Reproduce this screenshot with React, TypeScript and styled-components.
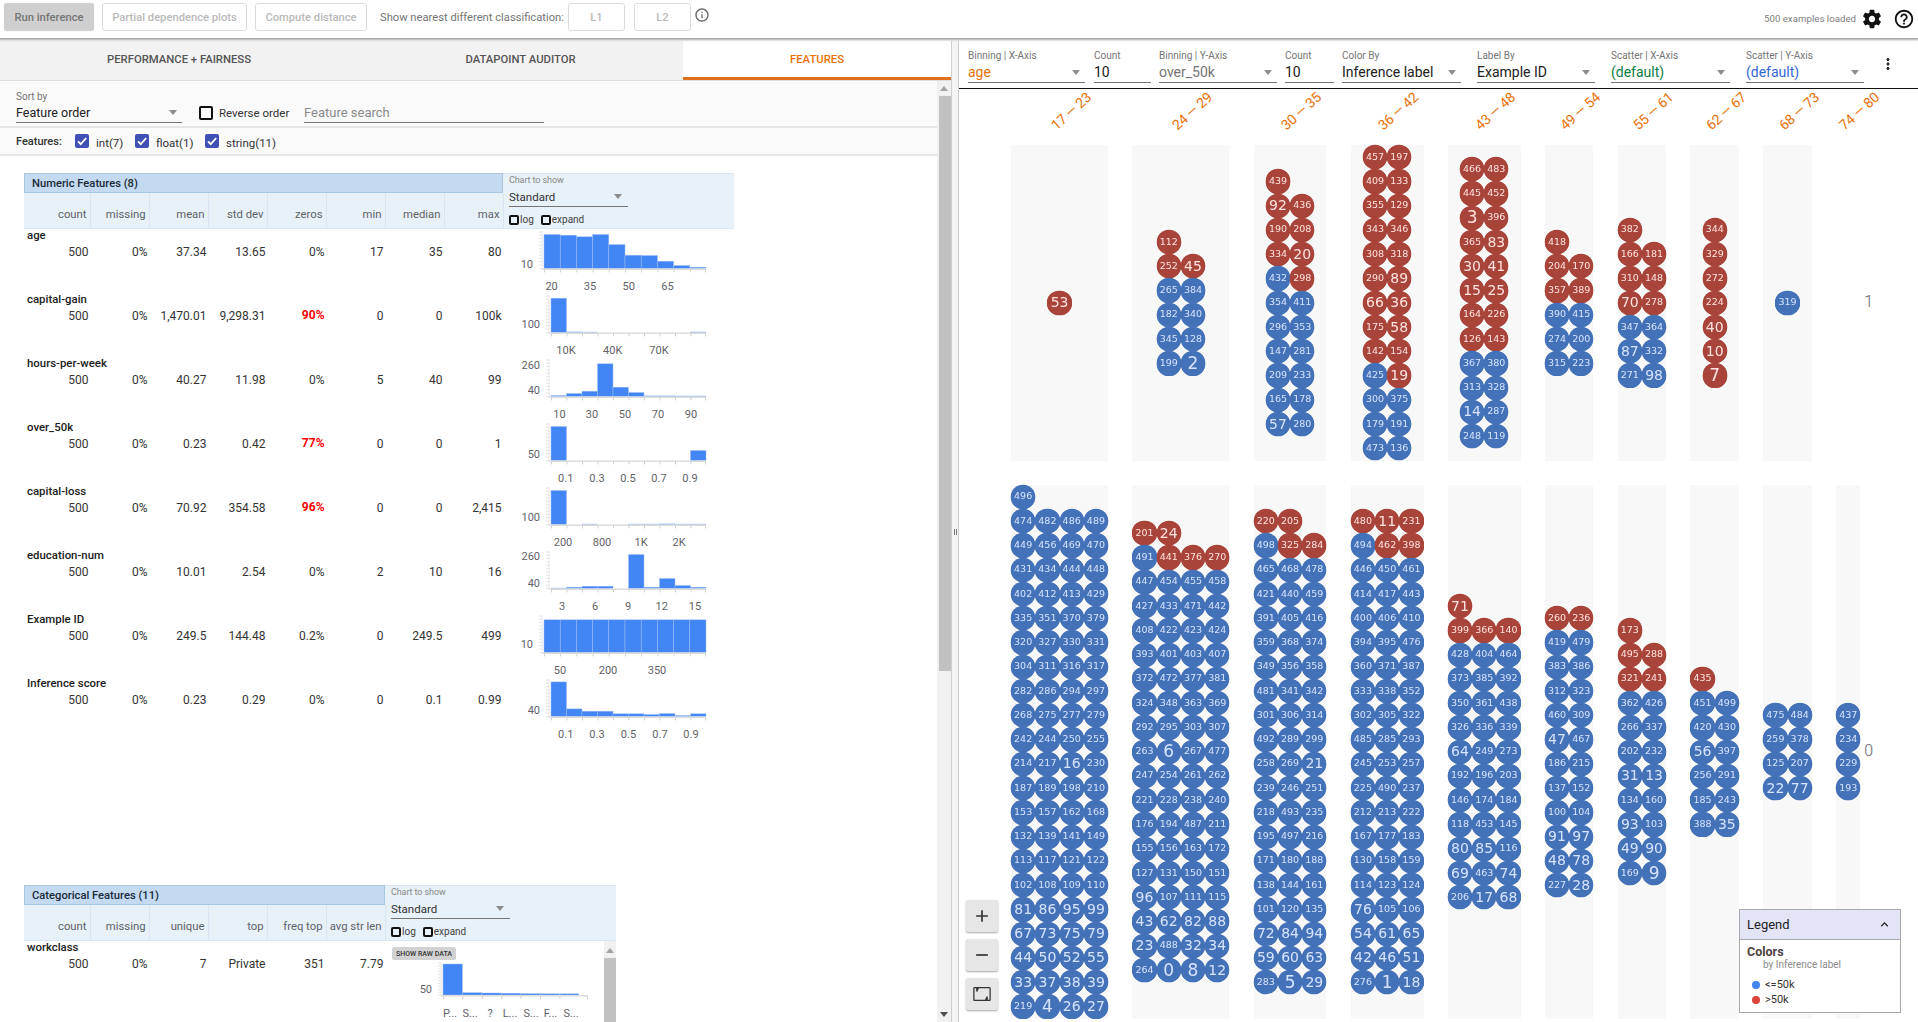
import React from "react";
import styled, { createGlobalStyle } from "styled-components";

const U = 24.27;

const GlobalStyle = createGlobalStyle`
  html, body {
    margin: 0;
    padding: 0;
    background: #fff;
    font-family: Roboto, "Liberation Sans", sans-serif;
    color: #212121;
    overflow: hidden;
  }
`;

type ChartSpec = {
  start: number;
  w: number;
  bars: number[];
  y: [string, number][];
  x: [string, number][];
};

const NUMERIC_COLUMNS = ["count", "missing", "mean", "std dev", "zeros", "min", "median", "max"];
const CAT_COLUMNS = ["count", "missing", "unique", "top", "freq top", "avg str len"];

const numericRows: { name: string; values: string[]; chart: ChartSpec }[] = [
  {
    name: "age",
    values: ["500", "0%", "37.34", "13.65", "0%", "17", "35", "80"],
    chart: {
      start: 544,
      w: 16.2,
      bars: [34, 33.3, 31.7, 34, 24, 13.3, 13, 7.3, 3, 1.3],
      y: [["10", 35.7]],
      x: [["20", 551.6], ["35", 590], ["50", 628.7], ["65", 667.5]],
    },
  },
  {
    name: "capital-gain",
    values: ["500", "0%", "1,470.01", "9,298.31", "90%", "0", "0", "100k"],
    chart: {
      start: 551,
      w: 15.5,
      bars: [34.3, 0.6, 0.4, 0, 0, 0, 0, 0, 0, 0.5],
      y: [["100", 32]],
      x: [["10K", 566], ["40K", 612.7], ["70K", 659]],
    },
  },
  {
    name: "hours-per-week",
    values: ["500", "0%", "40.27", "11.98", "0%", "5", "40", "99"],
    chart: {
      start: 551,
      w: 15.5,
      bars: [1, 3, 5.3, 32.7, 9.3, 4, 0.6, 0.6, 0.5, 0.5],
      y: [["260", 8.7], ["40", 34]],
      x: [["10", 559.4], ["30", 592], ["50", 625], ["70", 658], ["90", 691]],
    },
  },
  {
    name: "over_50k",
    values: ["500", "0%", "0.23", "0.42", "77%", "0", "0", "1"],
    chart: {
      start: 551,
      w: 15.5,
      bars: [34, 0, 0, 0, 0, 0, 0, 0, 0, 10],
      y: [["50", 34]],
      x: [["0.1", 565.7], ["0.3", 597], ["0.5", 628], ["0.7", 659], ["0.9", 690]],
    },
  },
  {
    name: "capital-loss",
    values: ["500", "0%", "70.92", "354.58", "96%", "0", "0", "2,415"],
    chart: {
      start: 551,
      w: 15.5,
      bars: [34, 0, 0.4, 0, 0, 0.4, 0.4, 0.6, 0.4, 0.4],
      y: [["100", 32.7]],
      x: [["200", 563], ["800", 602], ["1K", 641], ["2K", 679]],
    },
  },
  {
    name: "education-num",
    values: ["500", "0%", "10.01", "2.54", "0%", "2", "10", "16"],
    chart: {
      start: 551,
      w: 15.5,
      bars: [0.4, 1.3, 2.3, 2.3, 0, 34, 1.3, 10, 3, 1.3],
      y: [["260", 8.3], ["40", 34.7]],
      x: [["3", 562], ["6", 595], ["9", 628], ["12", 661.7], ["15", 695]],
    },
  },
  {
    name: "Example ID",
    values: ["500", "0%", "249.5", "144.48", "0.2%", "0", "249.5", "499"],
    chart: {
      start: 544,
      w: 16.2,
      bars: [32.7, 32.7, 32.7, 32.7, 32.7, 32.7, 32.7, 32.7, 32.7, 32.7],
      y: [["10", 32]],
      x: [["50", 560], ["200", 608], ["350", 657]],
    },
  },
  {
    name: "Inference score",
    values: ["500", "0%", "0.23", "0.29", "0%", "0", "0.1", "0.99"],
    chart: {
      start: 551,
      w: 15.5,
      bars: [34.6, 7.6, 5.3, 5.3, 2.7, 2.7, 2, 3, 1, 2.7],
      y: [["40", 33.7]],
      x: [["0.1", 565.7], ["0.3", 597], ["0.5", 628.5], ["0.7", 660], ["0.9", 691]],
    },
  },
];

const catChart: ChartSpec = {
  start: 443,
  w: 19.4,
  bars: [31, 2.3, 2, 1.8, 1.4, 1.2, 1.2],
  y: [["50", 30.5]],
  x: [["P...", 450], ["S...", 470], ["?", 490], ["L...", 510], ["S...", 531], ["F...", 550.5], ["S...", 571]],
};

const binLabels = ["17 — 23", "24 — 29", "30 — 35", "36 — 42", "43 — 48", "49 — 54", "55 — 61", "62 — 67", "68 — 73", "74 — 80"];
const binCols = [4, 4, 3, 3, 3, 2, 2, 2, 2, 1];

// "*" marks a >50k dot, "|" starts a new row
const topBins = [
  "*53",
  "*112|*252 *45|265 384|182 340|345 128|199 2",
  "*439|*92 *436|*190 *208|*334 *20|432 *298|354 411|296 353|147 281|209 233|165 178|57 280",
  "*457 *197|*409 *133|*355 *129|*343 *346|*308 *318|*290 *89|*66 *36|*175 *58|*142 *154|425 *19|300 375|179 191|473 136",
  "*466 *483|*445 *452|*3 *396|*365 *83|*30 *41|*15 *25|*164 *226|*126 *143|367 380|313 328|14 287|248 119",
  "*418|*204 *170|*357 *389|390 415|274 200|315 223",
  "*382|*166 *181|*310 *148|*70 *278|347 364|87 332|271 98",
  "*344|*329|*272|*224|*40|*10|*7",
  "319",
  "",
];

const bottomBins = [
  "496|474 482 486 489|449 456 469 470|431 434 444 448|402 412 413 429|335 351 370 379|320 327 330 331|304 311 316 317|282 286 294 297|268 275 277 279|242 244 250 255|214 217 16 230|187 189 198 210|153 157 162 168|132 139 141 149|113 117 121 122|102 108 109 110|81 86 95 99|67 73 75 79|44 50 52 55|33 37 38 39|219 4 26 27",
  "*201 *24|491 *441 *376 *270|447 454 455 458|427 433 471 442|408 422 423 424|393 401 403 407|372 472 377 381|324 348 363 369|292 295 303 307|263 6 267 477|247 254 261 262|221 228 238 240|176 194 487 211|155 156 163 172|127 131 150 151|96 107 111 115|43 62 82 88|23 488 32 34|264 0 8 12",
  "*220 *205|498 *325 *284|465 468 478|421 440 459|391 405 416|359 368 374|349 356 358|481 341 342|301 306 314|492 289 299|258 269 21|239 246 251|218 493 235|195 497 216|171 180 188|138 144 161|101 120 135|72 84 94|59 60 63|283 5 29",
  "*480 *11 *231|494 *462 *398|446 450 461|414 417 443|400 406 410|394 395 476|360 371 387|333 338 352|302 305 322|485 285 293|245 253 257|225 490 237|212 213 222|167 177 183|130 158 159|114 123 124|76 105 106|54 61 65|42 46 51|276 1 18",
  "*71|*399 *366 *140|428 404 464|373 385 392|350 361 438|326 336 339|64 249 273|192 196 203|146 174 184|118 453 145|80 85 116|69 463 74|206 17 68",
  "*260 *236|419 479|383 386|312 323|460 309|47 467|186 215|137 152|100 104|91 97|48 78|227 28",
  "*173|*495 *288|*321 *241|362 426|266 337|202 232|31 13|134 160|93 103|49 90|169 9",
  "*435|451 499|420 430|56 397|256 291|185 243|388 35",
  "475 484|259 378|125 207|22 77",
  "437|234|229|193",
];

const controls = [
  { label: "Binning | X-Axis", value: "age", width: 117, after: 9, color: "#e8710a", caret: true },
  { label: "Count", value: "10", width: 57, after: 8, color: "#212121", caret: false },
  { label: "Binning | Y-Axis", value: "over_50k", width: 118, after: 8, color: "#757575", caret: true },
  { label: "Count", value: "10", width: 49, after: 8, color: "#212121", caret: false },
  { label: "Color By", value: "Inference label", width: 119, after: 16, color: "#212121", caret: true },
  { label: "Label By", value: "Example ID", width: 118, after: 16, color: "#212121", caret: true },
  { label: "Scatter | X-Axis", value: "(default)", width: 119, after: 16, color: "#0b8043", caret: true },
  { label: "Scatter | Y-Axis", value: "(default)", width: 118, after: 0, color: "#3367d6", caret: true },
];

function Histogram({ spec, origin, base, labelY, axisEnd }: { spec: ChartSpec; origin: number; base: number; labelY: number; axisEnd: number }) {
  const left = spec.start - origin;
  const right = axisEnd - origin;
  const ladder = Array.from({ length: 12 }, (_, i) => 3 + ((base - 3) / 11) * i);
  return (
    <svg width="229" height="64" style={{ display: "block", flex: "none" }}>
      {ladder.map((y) => (
        <line key={y} x1={left - 5} x2={left - 2} y1={y} y2={y} stroke="#e3e3e3" />
      ))}
      <line x1={left - 2} x2={left - 2} y1={2} y2={base} stroke="#e6e6e6" />
      {spec.bars.map((h, i) => (
        <rect key={i} x={left + i * spec.w} y={base - h} width={spec.w} height={h} fill="#4285f4" stroke="#9dbdf7" strokeWidth="0.5" />
      ))}
      <rect x={left - 2} y={base} width={right - left + 2} height={1.5} fill="#dcdcdc" />
      {spec.bars.map((_, i) => (
        <line key={i} x1={left + i * spec.w + 0.5} x2={left + i * spec.w + 0.5} y1={base + 1} y2={base + 4} stroke="#cfcfcf" />
      ))}
      <line x1={right - 0.5} x2={right - 0.5} y1={base + 1} y2={base + 4} stroke="#cfcfcf" />
      {spec.y.map(([t, y]) => (
        <AxisText key={t} x={left - 11} y={y} textAnchor="end" dominantBaseline="middle">
          {t}
        </AxisText>
      ))}
      {spec.x.map(([t, x], i) => (
        <AxisText key={i} x={x - origin} y={labelY} textAnchor="middle" dominantBaseline="middle">
          {t}
        </AxisText>
      ))}
    </svg>
  );
}

function Dots({ rows }: { rows: string }) {
  return (
    <Stack>
      {rows.split("|").map((row, i) => (
        <DotRow key={i}>
          {row.split(" ").map((v) => {
            const id = v.replace("*", "");
            return (
              <Dot key={id} $red={v.startsWith("*")} $digits={id.length}>
                {id}
              </Dot>
            );
          })}
        </DotRow>
      ))}
    </Stack>
  );
}

function Caret() {
  return <CaretShape aria-hidden="true" />;
}

function BlueTick() {
  return (
    <BlueCheck viewBox="0 0 14 14">
      <path d="M3 7.3l2.8 2.9L11.2 4" />
    </BlueCheck>
  );
}

export default function App() {
  return (
    <Page>
      <GlobalStyle />
      <TopBar>
        <RunButton>Run inference</RunButton>
        <GhostButton $width={145}>Partial dependence plots</GhostButton>
        <GhostButton $width={112}>Compute distance</GhostButton>
        <NearestLabel>Show nearest different classification:</NearestLabel>
        <SmallButton $width={57}>L1</SmallButton>
        <SmallButton $width={57}>L2</SmallButton>
        <InfoIcon viewBox="0 0 24 24">
          <path d="M11 7h2v2h-2zm0 4h2v6h-2zm1-9C6.48 2 2 6.48 2 12s4.48 10 10 10 10-4.48 10-10S17.52 2 12 2zm0 18c-4.41 0-8-3.59-8-8s3.59-8 8-8 8 3.59 8 8-3.59 8-8 8z" />
        </InfoIcon>
        <LoadedText>500 examples loaded</LoadedText>
        <GearIcon viewBox="0 0 24 24">
          <path d="M19.43 12.98c.04-.32.07-.64.07-.98s-.03-.66-.07-.98l2.11-1.65c.19-.15.24-.42.12-.64l-2-3.46c-.12-.22-.39-.3-.61-.22l-2.49 1c-.52-.4-1.08-.73-1.69-.98l-.38-2.65C14.46 2.18 14.25 2 14 2h-4c-.25 0-.46.18-.49.42l-.38 2.65c-.61.25-1.17.59-1.69.98l-2.49-1c-.23-.09-.49 0-.61.22l-2 3.46c-.13.22-.07.49.12.64l2.11 1.65c-.04.32-.07.65-.07.98s.03.66.07.98l-2.11 1.65c-.19.15-.24.42-.12.64l2 3.46c.12.22.39.3.61.22l2.49-1c.52.4 1.08.73 1.69.98l.38 2.65c.03.24.24.42.49.42h4c.25 0 .46-.18.49-.42l.38-2.65c.61-.25 1.17-.59 1.69-.98l2.49 1c.23.09.49 0 .61-.22l2-3.46c.12-.22.07-.49-.12-.64l-2.11-1.65zM12 15.5c-1.93 0-3.5-1.57-3.5-3.5s1.57-3.5 3.5-3.5 3.5 1.57 3.5 3.5-1.57 3.5-3.5 3.5z" />
        </GearIcon>
        <HelpIcon viewBox="0 0 24 24">
          <path d="M11 18h2v-2h-2v2zm1-16C6.48 2 2 6.48 2 12s4.48 10 10 10 10-4.48 10-10S17.52 2 12 2zm0 18c-4.41 0-8-3.59-8-8s3.59-8 8-8 8 3.59 8 8-3.59 8-8 8zm0-14c-2.21 0-4 1.79-4 4h2c0-1.1.9-2 2-2s2 .9 2 2c0 2-3 1.75-3 5h2c0-2.25 3-2.5 3-5 0-2.21-1.79-4-4-4z" />
        </HelpIcon>
      </TopBar>

      <Main>
        <LeftPanel>
          <Tabs>
            <Tab $width={358}>PERFORMANCE + FAIRNESS</Tab>
            <Tab $width={325}>DATAPOINT AUDITOR</Tab>
            <Tab $width={268} $active>
              FEATURES
            </Tab>
          </Tabs>
          <ScrollArea>
            <ScrollContent>
              <SortBar>
                <SortSelect>
                  <TinyLabel>Sort by</TinyLabel>
                  <SelectValue>
                    Feature order
                    <Caret />
                  </SelectValue>
                </SortSelect>
                <BlackCheck />
                <ReverseLabel>Reverse order</ReverseLabel>
                <SearchField>Feature search</SearchField>
              </SortBar>
              <FeatureToggles>
                <TogglesTitle>Features:</TogglesTitle>
                <BlueTick />
                <ToggleLabel $width={39}>int(7)</ToggleLabel>
                <BlueTick />
                <ToggleLabel $width={49}>float(1)</ToggleLabel>
                <BlueTick />
                <ToggleLabel $width={60}>string(11)</ToggleLabel>
              </FeatureToggles>

              <Table $width={710} $top={17}>
                <TableHead>
                  <HeadLeft $width={479}>
                    <TitleBand>Numeric Features (8)</TitleBand>
                    <HeadCells>
                      {NUMERIC_COLUMNS.map((c, i) => (
                        <HeadCell key={c} $first={i === 0}>
                          {c}
                        </HeadCell>
                      ))}
                    </HeadCells>
                  </HeadLeft>
                  <ChartOptions />
                </TableHead>
                {numericRows.map((row) => (
                  <FeatureRow key={row.name}>
                    <RowLeft $width={479}>
                      <FeatureName>{row.name}</FeatureName>
                      <Values>
                        {row.values.map((v, i) => (
                          <Value key={i} $first={i === 0} $alert={i === 4 && parseFloat(v) > 50}>
                            {v}
                          </Value>
                        ))}
                      </Values>
                    </RowLeft>
                    <ChartSlot $left={2}>
                      <Histogram spec={row.chart} origin={505} base={39.5} labelY={58} axisEnd={706} />
                    </ChartSlot>
                  </FeatureRow>
                ))}
              </Table>

              <Table $width={592} $top={144}>
                <TableHead>
                  <HeadLeft $width={361}>
                    <TitleBand>Categorical Features (11)</TitleBand>
                    <HeadCells>
                      {CAT_COLUMNS.map((c, i) => (
                        <HeadCell key={c} $first={i === 0}>
                          {c}
                        </HeadCell>
                      ))}
                    </HeadCells>
                  </HeadLeft>
                  <ChartOptions />
                </TableHead>
                <CatBody>
                  <CatRows>
                    <CatRow>
                      <RowLeft $width={361}>
                        <FeatureName>workclass</FeatureName>
                        <Values>
                          {["500", "0%", "7", "Private", "351", "7.79"].map((v, i) => (
                            <Value key={i} $first={i === 0}>
                              {v}
                            </Value>
                          ))}
                        </Values>
                      </RowLeft>
                      <CatChartSlot>
                        <RawButton>SHOW RAW DATA</RawButton>
                        <Histogram spec={catChart} origin={392} base={35} labelY={53.7} axisEnd={588} />
                      </CatChartSlot>
                    </CatRow>
                    <FeatureName>marital-status</FeatureName>
                  </CatRows>
                  <InnerScrollbar>
                    <ArrowUp />
                    <InnerThumb />
                  </InnerScrollbar>
                </CatBody>
              </Table>
            </ScrollContent>
            <Scrollbar>
              <ArrowBox>
                <ArrowUp />
              </ArrowBox>
              <Thumb />
              <ScrollRest />
              <ArrowBox>
                <ArrowDown />
              </ArrowBox>
            </Scrollbar>
          </ScrollArea>
        </LeftPanel>

        <Divider>
          <HandleLine />
          <HandleLine />
        </Divider>

        <RightPanel>
          <Controls>
            {controls.map((c, i) => (
              <Field key={i} $width={c.width} $after={c.after}>
                <TinyLabel>{c.label}</TinyLabel>
                <FieldValue $color={c.color}>
                  {c.value}
                  {c.caret ? <Caret /> : null}
                </FieldValue>
              </Field>
            ))}
            <MoreIcon viewBox="0 0 24 24">
              <path d="M12 8c1.1 0 2-.9 2-2s-.9-2-2-2-2 .9-2 2 .9 2 2 2zm0 2c-1.1 0-2 .9-2 2s.9 2 2 2 2-.9 2-2-.9-2-2-2zm0 6c-1.1 0-2 .9-2 2s.9 2 2 2 2-.9 2-2-.9-2-2-2z" />
            </MoreIcon>
          </Controls>

          <Canvas>
            <LabelRow>
              {binLabels.map((l, i) => (
                <BinLabel key={l} $cols={binCols[i]}>
                  <BinLabelText>{l}</BinLabelText>
                </BinLabel>
              ))}
            </LabelRow>
            <BinRow $rows={13}>
              {topBins.map((rows, i) => (
                <Bin key={i} $cols={binCols[i]} $empty={!rows}>
                  {rows ? <Dots rows={rows} /> : null}
                </Bin>
              ))}
              <RowLabel>1</RowLabel>
            </BinRow>
            <BinRow $rows={22} $top>
              {bottomBins.map((rows, i) => (
                <Bin key={i} $cols={binCols[i]}>
                  <Dots rows={rows} />
                </Bin>
              ))}
              <RowLabel>0</RowLabel>
            </BinRow>
          </Canvas>

          <ZoomControls>
            <ZoomButton>
              <ZoomIcon viewBox="0 0 24 24">
                <path d="M19 13h-6v6h-2v-6H5v-2h6V5h2v6h6v2z" />
              </ZoomIcon>
            </ZoomButton>
            <ZoomButton>
              <ZoomIcon viewBox="0 0 24 24">
                <path d="M19 13H5v-2h14v2z" />
              </ZoomIcon>
            </ZoomButton>
            <ZoomButton>
              <ZoomIcon viewBox="0 0 24 24">
                <path d="M5 5h3v2H7v2H5V5zm14 14h-3v-2h1v-2h2v4zM3 3.5C2.2 3.5 1.5 4.2 1.5 5v14c0 .8.7 1.5 1.5 1.5h18c.8 0 1.5-.7 1.5-1.5V5c0-.8-.7-1.5-1.5-1.5H3zm0 1.5h18v14H3V5z" />
              </ZoomIcon>
            </ZoomButton>
          </ZoomControls>

          <Legend>
            <LegendHead>
              Legend
              <ChevronIcon viewBox="0 0 24 24">
                <path d="M7.41 15.41L12 10.83l4.59 4.58L18 14l-6-6-6 6z" />
              </ChevronIcon>
            </LegendHead>
            <LegendBody>
              <LegendTitle>Colors</LegendTitle>
              <LegendSub>by Inference label</LegendSub>
              <LegendItem>
                <LegendSwatch $color="#4285f4" />
                {"<=50k"}
              </LegendItem>
              <LegendItem>
                <LegendSwatch $color="#db4437" />
                {">50k"}
              </LegendItem>
            </LegendBody>
          </Legend>
        </RightPanel>
      </Main>
    </Page>
  );
}

function ChartOptions() {
  return (
    <OptionsBox>
      <ChartLabel>Chart to show</ChartLabel>
      <ChartSelect>
        Standard
        <Caret />
      </ChartSelect>
      <ChartChecks>
        <TinyCheck />
        log
        <TinyCheck $left={7} />
        expand
      </ChartChecks>
    </OptionsBox>
  );
}

const Page = styled.div`
  width: 1918px;
  height: 1022px;
  display: flex;
  flex-direction: column;
  overflow: hidden;
  position: relative;
`;

const TopBar = styled.header`
  height: 38px;
  flex: none;
  display: flex;
  align-items: center;
  padding: 0 0 4px 4px;
  box-sizing: border-box;
  background: #fff;
  box-shadow: 0 1px 2px 1px rgba(0, 0, 0, 0.35);
  position: relative;
  z-index: 2;
`;

const RunButton = styled.div`
  width: 90px;
  height: 28px;
  display: flex;
  align-items: center;
  justify-content: center;
  background: #cfcfcf;
  border-radius: 3px;
  color: #757575;
  font-size: 11.2px;
  font-weight: 500;
  box-shadow: 0 0 1px rgba(0, 0, 0, 0.2);
`;

const GhostButton = styled.div<{ $width: number }>`
  width: ${(p) => p.$width}px;
  height: 28px;
  margin-left: 8px;
  display: flex;
  align-items: center;
  justify-content: center;
  border: 1px solid #dcdcdc;
  border-radius: 3px;
  box-sizing: border-box;
  color: #b9b9b9;
  font-size: 11.2px;
  font-weight: 500;
`;

const NearestLabel = styled.span`
  margin-left: 13px;
  color: #757575;
  font-size: 11.2px;
  width: 188px;
  white-space: nowrap;
`;

const SmallButton = styled(GhostButton)`
  margin-left: 0;
  margin-right: 9px;
`;

const InfoIcon = styled.svg`
  width: 16px;
  height: 16px;
  margin: -4px 0 0 -6px;
  fill: #666;
`;

const LoadedText = styled.span`
  margin-left: auto;
  margin-top: 3px;
  color: #808080;
  font-size: 9.7px;
`;

const GearIcon = styled.svg`
  width: 22px;
  height: 22px;
  margin: 4px 0 0 5px;
  fill: #111;
`;

const HelpIcon = styled.svg`
  width: 22px;
  height: 22px;
  margin: 4px 3px 0 10px;
  fill: #111;
`;

const Main = styled.main`
  margin-top: 3px;
  flex: 1;
  min-height: 0;
  display: flex;
`;

const LeftPanel = styled.section`
  width: 951px;
  flex: none;
  display: flex;
  flex-direction: column;
  min-height: 0;
`;

const Tabs = styled.nav`
  height: 39px;
  flex: none;
  display: flex;
  background: #f2f2f2;
  border-bottom: 1px solid #dedede;
  box-sizing: content-box;
`;

const Tab = styled.div<{ $width: number; $active?: boolean }>`
  width: ${(p) => p.$width}px;
  flex: none;
  display: flex;
  align-items: center;
  justify-content: center;
  box-sizing: border-box;
  font-size: 11.3px;
  font-weight: 500;
  color: ${(p) => (p.$active ? "#e8710a" : "#555")};
  background: ${(p) => (p.$active ? "#fff" : "transparent")};
  border-bottom: 3px solid ${(p) => (p.$active ? "#e0701e" : "transparent")};
  padding-top: 1px;
`;

const ScrollArea = styled.div`
  flex: 1;
  min-height: 0;
  display: flex;
`;

const ScrollContent = styled.div`
  width: 937px;
  flex: none;
  overflow: hidden;
`;

const Scrollbar = styled.div`
  width: 14px;
  flex: none;
  display: flex;
  flex-direction: column;
  background: #f1f1f1;
`;

const ArrowBox = styled.div`
  height: 15px;
  flex: none;
  display: flex;
  align-items: center;
  justify-content: center;
`;

const Thumb = styled.div`
  height: 575px;
  flex: none;
  margin-left: 2px;
  background: #c1c1c1;
`;

const ScrollRest = styled.div`
  flex: 1;
`;

const ArrowUp = styled.div`
  width: 0;
  height: 0;
  border-left: 4px solid transparent;
  border-right: 4px solid transparent;
  border-bottom: 5px solid #a3a3a3;
`;

const ArrowDown = styled.div`
  width: 0;
  height: 0;
  border-left: 4px solid transparent;
  border-right: 4px solid transparent;
  border-top: 5px solid #505050;
`;

const SortBar = styled.div`
  height: 47px;
  box-sizing: border-box;
  display: flex;
  align-items: flex-end;
  padding: 0 0 3px 16px;
  background: #fafafa;
  border-bottom: 2px solid #e6e6e6;
`;

const SortSelect = styled.div`
  width: 166px;
  flex: none;
`;

const TinyLabel = styled.div`
  font-size: 10px;
  line-height: 13px;
  color: #757575;
`;

const SelectValue = styled.div`
  height: 20px;
  display: flex;
  align-items: center;
  justify-content: space-between;
  padding: 0 5px 1px 0;
  font-size: 12.5px;
  color: #212121;
  border-bottom: 1px solid #757575;
  box-sizing: border-box;
`;

const CaretShape = styled.span`
  width: 0;
  height: 0;
  border-left: 4px solid transparent;
  border-right: 4px solid transparent;
  border-top: 5px solid #8c8c8c;
`;

const BlackCheck = styled.span`
  width: 14px;
  height: 14px;
  flex: none;
  margin: 0 6px 3px 17px;
  align-self: flex-end;
  border: 2px solid #111;
  border-radius: 2px;
  box-sizing: border-box;
`;

const ReverseLabel = styled.span`
  width: 85px;
  flex: none;
  font-size: 11.5px;
  color: #333;
  padding-bottom: 3px;
  white-space: nowrap;
`;

const SearchField = styled.div`
  width: 240px;
  height: 20px;
  display: flex;
  align-items: center;
  padding-bottom: 1px;
  box-sizing: border-box;
  font-size: 13px;
  color: #8a8a8a;
  border-bottom: 1px solid #757575;
`;

const FeatureToggles = styled.div`
  height: 28px;
  box-sizing: border-box;
  display: flex;
  align-items: center;
  padding: 0 0 0 16px;
  background: #fafafa;
  border-bottom: 2px solid #e6e6e6;
`;

const TogglesTitle = styled.span`
  width: 59px;
  font-size: 11px;
  font-weight: 500;
  color: #333;
`;

const BlueCheck = styled.svg`
  width: 14px;
  height: 14px;
  flex: none;
  background: #3f51b5;
  border-radius: 2px;
  fill: none;
  stroke: #fff;
  stroke-width: 1.8;
`;

const ToggleLabel = styled.span<{ $width: number }>`
  width: ${(p) => p.$width}px;
  margin-left: 7px;
  padding-top: 3px;
  font-size: 11.5px;
  color: #333;
  white-space: nowrap;
`;

const Table = styled.div<{ $width: number; $top: number }>`
  width: ${(p) => p.$width}px;
  margin: ${(p) => p.$top}px 0 0 24px;
`;

const TableHead = styled.div`
  height: 56px;
  display: flex;
  background: #e8f0f8;
  border: 1px solid #d8e5f2;
  border-width: 1px 0;
  box-sizing: border-box;
`;

const HeadLeft = styled.div<{ $width: number }>`
  width: ${(p) => p.$width}px;
  flex: none;
  display: flex;
  flex-direction: column;
`;

const TitleBand = styled.div`
  height: 20px;
  flex: none;
  display: flex;
  align-items: center;
  padding-left: 7px;
  margin-top: -1px;
  background: #c3daf0;
  border: 1px solid #a9c6e0;
  box-sizing: border-box;
  font-size: 11.2px;
  font-weight: 500;
  color: #1a2a3a;
`;

const HeadCells = styled.div`
  flex: 1;
  display: flex;
`;

const HeadCell = styled.div<{ $first?: boolean }>`
  width: ${(p) => (p.$first ? 66.5 : 59)}px;
  flex: none;
  box-sizing: border-box;
  display: flex;
  align-items: flex-end;
  justify-content: flex-end;
  padding: 0 3px 7px 0;
  border-right: 1px solid #d8e5f2;
  font-size: 11.3px;
  color: #5f6368;
  white-space: nowrap;
`;

const OptionsBox = styled.div`
  flex: 1;
  padding: 0 0 0 6px;
  box-sizing: border-box;
`;

const ChartLabel = styled.div`
  font-size: 9px;
  line-height: 13px;
  letter-spacing: -0.1px;
  color: #8a8a8a;
`;

const ChartSelect = styled.div`
  width: 119px;
  height: 20px;
  display: flex;
  align-items: center;
  justify-content: space-between;
  padding-right: 6px;
  box-sizing: border-box;
  font-size: 11.5px;
  color: #333;
  border-bottom: 1px solid #757575;
`;

const ChartChecks = styled.div`
  display: flex;
  align-items: center;
  margin-top: 7px;
  font-size: 10px;
  color: #444;
`;

const TinyCheck = styled.span<{ $left?: number }>`
  width: 10px;
  height: 10px;
  margin: 0 1px 0 ${(p) => p.$left ?? 0}px;
  border: 2px solid #111;
  border-radius: 2px;
  box-sizing: border-box;
`;

const FeatureRow = styled.div`
  height: 64px;
  display: flex;
`;

const RowLeft = styled.div<{ $width: number }>`
  width: ${(p) => p.$width}px;
  flex: none;
`;

const FeatureName = styled.div`
  margin-top: -1px;
  padding-left: 3px;
  font-size: 11.4px;
  line-height: 14px;
  font-weight: 500;
  color: #212121;
`;

const Values = styled.div`
  display: flex;
  margin-top: 3px;
`;

const Value = styled.div<{ $first?: boolean; $alert?: boolean }>`
  width: ${(p) => (p.$first ? 66.5 : 59)}px;
  flex: none;
  box-sizing: border-box;
  padding-right: 2px;
  text-align: right;
  font-size: 12px;
  line-height: 14px;
  color: ${(p) => (p.$alert ? "#f00" : "#333")};
  font-weight: ${(p) => (p.$alert ? 700 : 400)};
  ${(p) => (p.$alert ? "margin-top: -1px;" : "")}
`;

const ChartSlot = styled.div<{ $left: number }>`
  margin-left: ${(p) => p.$left}px;
`;

const AxisText = styled.text`
  font-size: 11px;
  fill: #5f6368;
`;

const CatBody = styled.div`
  height: 90px;
  display: flex;
  overflow: hidden;
`;

const CatRows = styled.div`
  flex: 1;
  min-width: 0;
`;

const CatRow = styled.div`
  height: 81px;
  display: flex;
  overflow: hidden;
`;

const CatChartSlot = styled.div`
  padding: 6px 0 0 7px;
`;

const RawButton = styled.div`
  width: 64px;
  height: 13px;
  display: flex;
  align-items: center;
  justify-content: center;
  background: #d2d2d2;
  border-radius: 2px;
  font-size: 7px;
  font-weight: 500;
  color: #333;
  white-space: nowrap;
`;

const InnerScrollbar = styled.div`
  width: 12px;
  flex: none;
  display: flex;
  flex-direction: column;
  align-items: center;
  padding-top: 7px;
  box-sizing: border-box;
  background: #f1f1f1;
`;

const InnerThumb = styled.div`
  width: 100%;
  flex: 1;
  margin-top: 5px;
  background: #c1c1c1;
`;

const Divider = styled.div`
  width: 8px;
  flex: none;
  display: flex;
  align-items: center;
  justify-content: center;
  gap: 1px;
  background: #f4f4f4;
  border-left: 1.5px solid #cfcfcf;
  border-right: 1px solid #cfcfcf;
  box-sizing: border-box;
`;

const HandleLine = styled.span`
  width: 1px;
  height: 6px;
  background: #777;
`;

const RightPanel = styled.section`
  flex: 1;
  min-width: 0;
  position: relative;
  display: flex;
  flex-direction: column;
`;

const Controls = styled.div`
  height: 48px;
  flex: none;
  display: flex;
  padding: 8px 0 0 9px;
  box-sizing: border-box;
  border-bottom: 1.5px solid #111;
`;

const Field = styled.div<{ $width: number; $after: number }>`
  width: ${(p) => p.$width}px;
  margin-right: ${(p) => p.$after}px;
  flex: none;
`;

const FieldValue = styled.div<{ $color: string }>`
  height: 21px;
  display: flex;
  align-items: center;
  justify-content: space-between;
  padding-right: 5px;
  box-sizing: border-box;
  font-size: 14px;
  color: ${(p) => p.$color};
  border-bottom: 1px solid #757575;
`;

const MoreIcon = styled.svg`
  width: 18px;
  height: 18px;
  margin: 6px 0 0 15px;
  fill: #222;
`;

const Canvas = styled.div`
  flex: 1;
  min-height: 0;
  padding-left: 52px;
  overflow: hidden;
`;

const LabelRow = styled.div`
  height: 56px;
  display: flex;
  gap: ${U}px;
`;

const BinLabel = styled.div<{ $cols: number }>`
  width: ${(p) => p.$cols * U}px;
  flex: none;
  display: flex;
  align-items: center;
  justify-content: center;
  padding-bottom: 12px;
  box-sizing: border-box;
`;

const BinLabelText = styled.span`
  font-size: 14px;
  letter-spacing: -0.2px;
  color: #e8710a;
  white-space: nowrap;
  transform: translateX(11px) rotate(-42deg);
`;

const BinRow = styled.div<{ $rows: number; $top?: boolean }>`
  height: ${(p) => p.$rows * U}px;
  margin-top: ${(p) => (p.$top ? U : 0)}px;
  display: flex;
  gap: ${U}px;
`;

const Bin = styled.div<{ $cols: number; $empty?: boolean }>`
  width: ${(p) => p.$cols * U}px;
  flex: none;
  display: flex;
  align-items: center;
  justify-content: center;
  background: ${(p) => (p.$empty ? "transparent" : "#f8f8f8")};
`;

const Stack = styled.div`
  display: flex;
  flex-direction: column;
  filter: blur(0.35px);
`;

const DotRow = styled.div`
  display: flex;
  height: ${U}px;
`;

const Dot = styled.div<{ $red: boolean; $digits: number }>`
  width: ${U}px;
  height: ${U}px;
  flex: none;
  display: flex;
  align-items: center;
  justify-content: center;
  border-radius: 50%;
  box-shadow: 0 0 0 0.3px ${(p) => (p.$red ? "#a9443a" : "#4472b8")};
  background: ${(p) => (p.$red ? "#a9443a" : "#4472b8")};
  color: ${(p) => (p.$red ? "#ffe3df" : "#d6e4ff")};
  font-family: "DejaVu Sans", sans-serif;
  font-size: ${(p) => (p.$digits === 3 ? 9.5 : p.$digits === 2 ? 14 : 17)}px;
  padding-bottom: ${(p) => (p.$digits === 3 ? 2 : 1)}px;
  box-sizing: border-box;
`;

const RowLabel = styled.div`
  align-self: center;
  margin: -2px 0 0 ${-U + 4}px;
  font-size: 16px;
  font-weight: 300;
  color: #666;
`;

const ZoomControls = styled.div`
  position: absolute;
  left: 7px;
  bottom: 12px;
  display: flex;
  flex-direction: column;
  gap: 7px;
`;

const ZoomButton = styled.div`
  width: 32px;
  height: 32px;
  display: flex;
  align-items: center;
  justify-content: center;
  background: #e6e6e6;
  border-radius: 2px;
  box-shadow: 0 1px 2px rgba(0, 0, 0, 0.35);
`;

const ZoomIcon = styled.svg`
  width: 20px;
  height: 20px;
  fill: #333;
`;

const Legend = styled.aside`
  position: absolute;
  right: 17px;
  bottom: 9px;
  width: 162px;
  background: #fff;
  border: 1px solid #aaa;
  box-sizing: border-box;
`;

const LegendHead = styled.div`
  height: 29px;
  display: flex;
  align-items: center;
  justify-content: space-between;
  padding: 0 8px 0 7px;
  background: #e3e5f7;
  border-bottom: 1px solid #aaa;
  font-size: 13px;
  color: #212121;
`;

const ChevronIcon = styled.svg`
  width: 15px;
  height: 15px;
  fill: #222;
`;

const LegendBody = styled.div`
  padding: 4px 7px 5px;
`;

const LegendTitle = styled.div`
  font-size: 12.5px;
  line-height: 15px;
  font-weight: 700;
  color: #4e4242;
`;

const LegendSub = styled.div`
  margin-left: 16px;
  font-size: 10px;
  line-height: 12px;
  color: #8a8a8a;
  margin-bottom: 6px;
`;

const LegendItem = styled.div`
  display: flex;
  align-items: center;
  height: 15px;
  font-size: 11px;
  color: #333;
`;

const LegendSwatch = styled.span<{ $color: string }>`
  width: 8px;
  height: 8px;
  margin: 0 5px 0 5px;
  border-radius: 50%;
  background: ${(p) => p.$color};
`;
